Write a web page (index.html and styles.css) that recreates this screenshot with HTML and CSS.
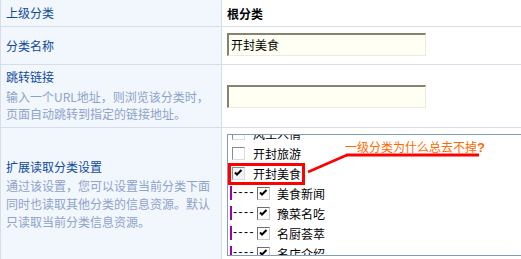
FILE: index.html
```html
<!DOCTYPE html>
<html lang="zh-CN">
<head>
  <meta charset="UTF-8" />
  <title>分类设置</title>
  <link rel="stylesheet" href="styles.css">
</head>
<body>
  <div class="form">
    <div class="label r1"><div class="title">上级分类</div></div>
    <div class="field r1"><b>根分类</b></div>

    <div class="label r2"><div class="title">分类名称</div></div>
    <div class="field r2"><div class="input">开封美食</div></div>

    <div class="label r3">
      <div class="title">跳转链接</div>
      <div class="desc">输入一个URL地址，则浏览该分类时，<br>页面自动跳转到指定的链接地址。</div>
    </div>
    <div class="field r3"><div class="input"></div></div>

    <div class="label r4">
      <div class="title">扩展读取分类设置</div>
      <div class="desc">通过该设置，您可以设置当前分类下面<br>同时也读取其他分类的信息资源。默认<br>只读取当前分类信息资源。</div>
    </div>
    <div class="field r4">
      <div class="tree">
        <div class="tree-inner">
          <div class="node"><span class="cb"></span>风土人情</div>
          <div class="node"><span class="cb"></span>开封旅游</div>
          <div class="node"><span class="cb on"><svg width="11" height="11" viewBox="0 0 11 11"><path d="M2 4.5 L4 6.5 L8.5 2" fill="none" stroke="#000" stroke-width="2"/></svg></span>开封美食</div>
          <div class="node child"><span class="branch">----</span><span class="cb on"><svg width="11" height="11" viewBox="0 0 11 11"><path d="M2 4.5 L4 6.5 L8.5 2" fill="none" stroke="#000" stroke-width="2"/></svg></span>美食新闻</div>
          <div class="node child"><span class="branch">----</span><span class="cb on"><svg width="11" height="11" viewBox="0 0 11 11"><path d="M2 4.5 L4 6.5 L8.5 2" fill="none" stroke="#000" stroke-width="2"/></svg></span>豫菜名吃</div>
          <div class="node child"><span class="branch">----</span><span class="cb on"><svg width="11" height="11" viewBox="0 0 11 11"><path d="M2 4.5 L4 6.5 L8.5 2" fill="none" stroke="#000" stroke-width="2"/></svg></span>名厨荟萃</div>
          <div class="node child"><span class="branch">----</span><span class="cb on"><svg width="11" height="11" viewBox="0 0 11 11"><path d="M2 4.5 L4 6.5 L8.5 2" fill="none" stroke="#000" stroke-width="2"/></svg></span>名店介绍</div>
        </div>
      </div>
    </div>
  </div>

  <!-- annotation drawn over the screenshot -->
  <svg class="marks" width="521" height="259">
    <rect x="229.5" y="164.5" width="74" height="19" fill="none" stroke="#ff0000" stroke-width="3"/>
    <path d="M346 155 L479 155" stroke="#ff0000" stroke-width="3"/>
    <path d="M347 155 L308 172" stroke="#ff0000" stroke-width="2.5"/>
  </svg>
  <div class="note">一级分类为什么总去不掉<b>?</b></div>
</body>
</html>
```

FILE: styles.css
```css
html, body {
  margin: 0;
  padding: 0;
}
body {
  position: relative;
  width: 521px;
  height: 259px;
  overflow: hidden;
  background: #fff;
  font-family: "Noto Sans CJK SC", "Liberation Sans", sans-serif;
  font-size: 12px;
  color: #000;
}
.form {
  display: grid;
  grid-template-columns: 222px 1fr;
  grid-template-rows: 27px 38px 63px 1fr;
  height: 259px;
}
.label,
.field {
  box-sizing: border-box;
  border-bottom: 1px solid #d6deec;
}
.label {
  background: #f2f6fd;
  border-left: 1px solid #d6deec;
  border-right: 1px solid #d6deec;
  padding-left: 5px;
  display: flex;
  flex-direction: column;
  justify-content: center;
}
.label .title {
  color: #0e4c9a;
  line-height: 20px;
}
.label .desc {
  color: #8ea3c9;
  line-height: 18px;
}
.r3 .desc {
  line-height: 17px;
  margin-top: 1px;
}
.label.r3 {
  padding-bottom: 4px;
}
.label.r4 {
  border-bottom: none;
}
.field {
  padding-left: 5px;
  display: flex;
  align-items: center;
}
.field.r1 b {
  font-weight: bold;
}
.field.r2 {
  align-items: flex-start;
  padding-top: 6px;
}
.field.r4 {
  align-items: flex-start;
  padding-top: 6px;
  border-bottom: none;
}
.input {
  box-sizing: border-box;
  width: 199px;
  height: 23px;
  background: #fffff3;
  border-style: solid;
  border-width: 2px 1px 1px 2px;
  border-color: #858374 #ecebe0 #ecebe0 #858374;
  padding-left: 2px;
  line-height: 20px;
}
.tree {
  box-sizing: border-box;
  width: 320px;
  height: 122px;
  border: 1px solid #7f9db9;
  background: #fff;
  overflow: hidden;
}
.tree-inner {
  margin-top: -12px;
}
.node {
  height: 20px;
  display: flex;
  align-items: center;
  padding-left: 4px;
}
.node.child {
  padding-left: 2px;
}
.cb {
  box-sizing: border-box;
  width: 13px;
  height: 13px;
  border: 1px solid #8c8c8c;
  border-right-color: #dcdcdc;
  border-bottom-color: #dcdcdc;
  background: #fff;
  margin-right: 8px;
  display: flex;
  align-items: center;
  justify-content: center;
}
.cb.on {
  background: #f4f4f4;
}
.child .cb {
  border-color: #6e6e6e #c8c8c8 #c8c8c8 #6e6e6e;
  background: #fff;
  margin-right: 7px;
}
.branch {
  box-sizing: border-box;
  height: 14px;
  border-left: 2px solid #a000a8;
  padding-left: 1px;
  margin-right: 2px;
  font-family: "Liberation Sans", sans-serif;
  font-size: 12px;
  letter-spacing: 1.5px;
  line-height: 13px;
}
.marks {
  position: absolute;
  left: 0;
  top: 0;
}
.note {
  position: absolute;
  left: 345px;
  top: 139px;
  color: #ff6a00;
  line-height: 16px;
  white-space: nowrap;
}
.note b {
  font-family: "Liberation Sans", sans-serif;
  font-size: 13px;
}
```
